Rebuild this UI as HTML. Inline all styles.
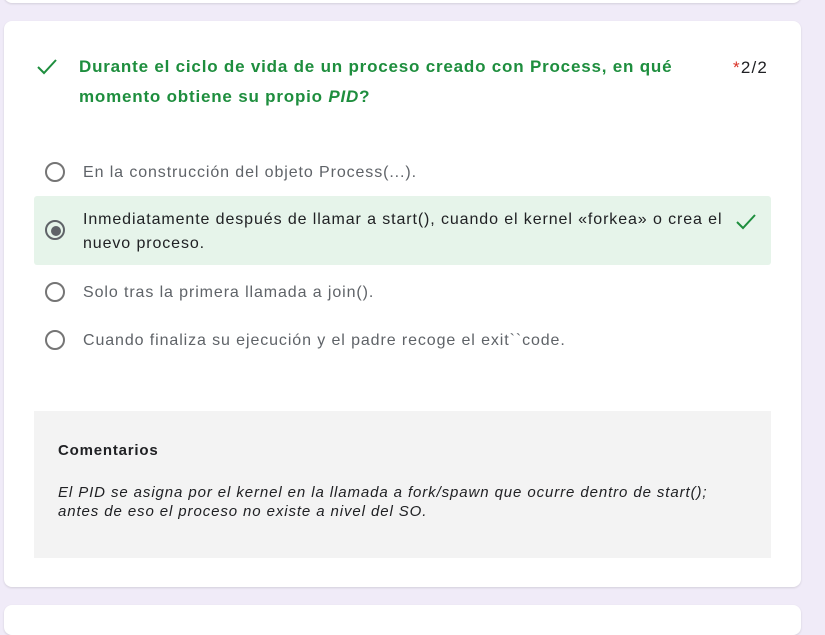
<!DOCTYPE html>
<html><head><meta charset="utf-8"><style>
body{margin:0;width:825px;height:613px;background:#f0ebf8;font-family:"Liberation Sans",sans-serif;position:relative;overflow:hidden}
.card{position:absolute;left:4px;width:797px;background:#fff;border-radius:8px;box-shadow:0 1px 2px rgba(0,0,0,.12)}
.a{position:absolute;white-space:nowrap}
.rad{position:absolute;width:16px;height:16px;border:2px solid #757575;border-radius:50%}
.opt{position:absolute;left:83px;font-size:16px;color:#5f6368;letter-spacing:0.9px;white-space:nowrap}
</style></head><body>
<div class="card" style="top:-20px;height:23px"></div>
<div class="card" style="top:21px;height:566px"></div>
<div class="card" style="top:605px;height:30px"></div>

<svg class="a" style="left:36px;top:57px" width="22" height="20" viewBox="0 0 22 20"><path d="M2 10 L8 16 L20 3" fill="none" stroke="#1e8e3e" stroke-width="2"/></svg>
<div class="a" style="left:79px;top:52px;font-size:17px;font-weight:bold;color:#1e8e3e;line-height:30px;letter-spacing:0.8px">Durante el ciclo de vida de un proceso creado con Process, en qué<br>momento obtiene su propio <i>PID</i>?</div>
<div class="a" style="left:733px;top:58px;font-size:17px;color:#202124;letter-spacing:1.2px"><span style="color:#d93025">*</span>2/2</div>

<div class="rad" style="left:45px;top:162px"></div>
<div class="opt" style="top:164px">En la construcción del objeto Process(...).</div>

<div class="a" style="left:34px;top:196px;width:737px;height:69px;background:#e6f4ea;border-radius:3px"></div>
<div class="rad" style="left:45px;top:220px;border-color:#5f6368"></div>
<div class="a" style="left:51px;top:226px;width:10px;height:10px;border-radius:50%;background:#5f6368"></div>
<div class="opt" style="top:208px;color:#202124;line-height:24px">Inmediatamente después de llamar a start(), cuando el kernel «forkea» o crea el<br>nuevo proceso.</div>
<svg class="a" style="left:735px;top:212px" width="22" height="20" viewBox="0 0 22 20"><path d="M2 10 L8 16 L20 3" fill="none" stroke="#1e8e3e" stroke-width="2"/></svg>

<div class="rad" style="left:45px;top:282px"></div>
<div class="opt" style="top:284px">Solo tras la primera llamada a join().</div>
<div class="rad" style="left:45px;top:330px"></div>
<div class="opt" style="top:332px">Cuando finaliza su ejecución y el padre recoge el exit``code.</div>

<div class="a" style="left:34px;top:411px;width:737px;height:147px;background:#f3f3f3"></div>
<div class="a" style="left:58px;top:442px;font-size:15px;font-weight:bold;color:#202124;letter-spacing:0.8px">Comentarios</div>
<div class="a" style="left:58px;top:483px;font-size:15px;font-style:italic;color:#202124;line-height:19px;letter-spacing:0.9px">El PID se asigna por el kernel en la llamada a fork/spawn que ocurre dentro de start();<br>antes de eso el proceso no existe a nivel del SO.</div>
</body></html>
